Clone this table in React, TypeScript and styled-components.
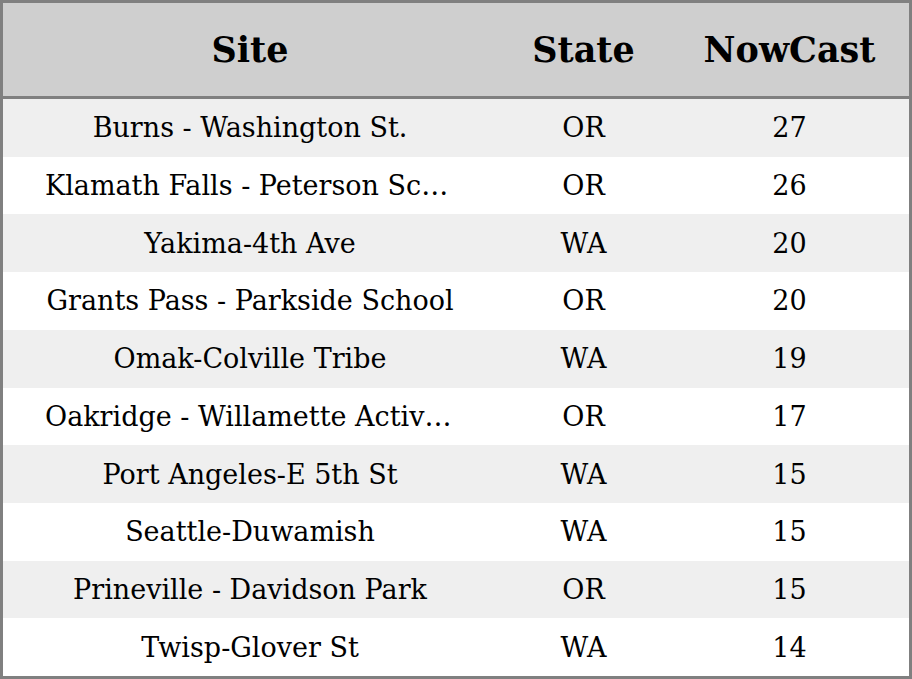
import styled, { createGlobalStyle } from "styled-components";

const rows = [
  { site: "Burns - Washington St.", state: "OR", nowcast: 27 },
  { site: "Klamath Falls - Peterson School", state: "OR", nowcast: 26 },
  { site: "Yakima-4th Ave", state: "WA", nowcast: 20 },
  { site: "Grants Pass - Parkside School", state: "OR", nowcast: 20 },
  { site: "Omak-Colville Tribe", state: "WA", nowcast: 19 },
  { site: "Oakridge - Willamette Activity Center", state: "OR", nowcast: 17 },
  { site: "Port Angeles-E 5th St", state: "WA", nowcast: 15 },
  { site: "Seattle-Duwamish", state: "WA", nowcast: 15 },
  { site: "Prineville - Davidson Park", state: "OR", nowcast: 15 },
  { site: "Twisp-Glover St", state: "WA", nowcast: 14 },
];

export default function App() {
  return (
    <>
      <GlobalStyle />
      <Table>
        <HeaderRow>
          <HeadCell>Site</HeadCell>
          <HeadCell>State</HeadCell>
          <HeadCell>NowCast</HeadCell>
        </HeaderRow>
        {rows.map((r, i) => (
          <Row key={i} $striped={i % 2 === 0}>
            <SiteCell>{r.site}</SiteCell>
            <Cell>{r.state}</Cell>
            <Cell>{r.nowcast}</Cell>
          </Row>
        ))}
      </Table>
    </>
  );
}

const GlobalStyle = createGlobalStyle`
  html, body, #root {
    margin: 0;
    height: 100%;
  }
  body {
    font-family: "DejaVu Serif", serif;
    color: #000;
    background: #fff;
  }
`;

const Table = styled.div`
  box-sizing: border-box;
  height: 679px;
  width: 912px;
  border: 3px solid #808080;
  display: flex;
  flex-direction: column;
`;

const HeaderRow = styled.div`
  display: grid;
  grid-template-columns: 494px 173px 1fr;
  height: 93px;
  flex: none;
  background: #cfcfcf;
  border-bottom: 3px solid #808080;
`;

const HeadCell = styled.div`
  display: flex;
  align-items: center;
  justify-content: center;
  font-weight: bold;
  font-size: 35px;
`;

const Row = styled.div<{ $striped: boolean }>`
  display: grid;
  grid-template-columns: 494px 173px 1fr;
  flex: 1;
  align-items: center;
  background: ${(p) => (p.$striped ? "#efefef" : "#fff")};
`;

const Cell = styled.div`
  text-align: center;
  font-size: 27px;
`;

const SiteCell = styled(Cell)`
  padding: 0 42px;
  white-space: nowrap;
  overflow: hidden;
  text-overflow: ellipsis;
`;
